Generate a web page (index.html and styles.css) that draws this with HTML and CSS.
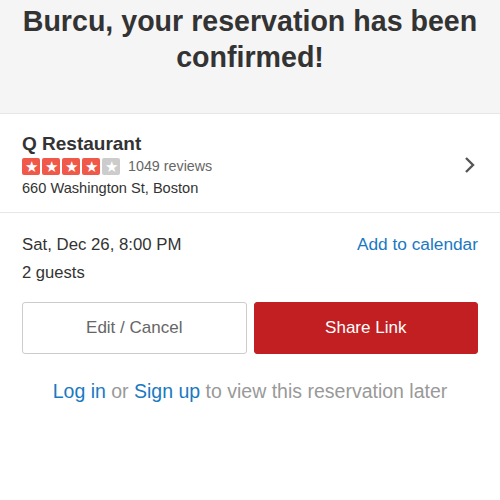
FILE: index.html
```html
<!DOCTYPE html>
<html>
<head>
    <title>Reservation confirmed</title>
    <link rel="stylesheet" href="styles.css">
</head>
<body>
    <div class="header">
        <h1>Burcu, your reservation has been confirmed!</h1>
    </div>

    <div class="biz">
        <div class="biz-info">
            <div class="biz-name">Q Restaurant</div>
            <div class="rating">
                <div class="stars">
                    <span class="star on">&#9733;</span>
                    <span class="star on">&#9733;</span>
                    <span class="star on">&#9733;</span>
                    <span class="star on">&#9733;</span>
                    <span class="star">&#9733;</span>
                </div>
                <span class="reviews">1049 reviews</span>
            </div>
            <div class="address">660 Washington St, Boston</div>
        </div>
        <svg class="chevron" width="12" height="18" viewBox="0 0 12 18">
            <path d="M2 2 L9 9 L2 16" fill="none" stroke="#555" stroke-width="2.4"/>
        </svg>
    </div>

    <div class="details">
        <div class="row">
            <span>Sat, Dec 26, 8:00 PM</span>
            <a class="link" href="#">Add to calendar</a>
        </div>
        <div class="guests">2 guests</div>

        <div class="buttons">
            <button class="btn btn-plain">Edit / Cancel</button>
            <button class="btn btn-red">Share Link</button>
        </div>

        <p class="login"><a class="link" href="#">Log in</a> or <a class="link" href="#">Sign up</a> to view this reservation later</p>
    </div>
</body>
</html>
```

FILE: styles.css
```css
body { margin: 0; font-family: "Liberation Sans", Arial, sans-serif; color: #333; background: #fff; }

.header { background: #f5f5f5; height: 114px; border-bottom: 1px solid #e6e6e6; padding-top: 3px; box-sizing: border-box; }
.header h1 { margin: 0; padding: 0 16px; font-size: 28.6px; line-height: 36px; text-align: center; color: #333; }

.biz { display: flex; align-items: center; justify-content: space-between; padding: 18px 24px 14px 22px; border-bottom: 1px solid #e6e6e6; height: 99px; box-sizing: border-box; }
.biz-name { font-size: 19px; font-weight: bold; line-height: 22px; }
.rating { display: flex; align-items: center; margin-top: 3px; }
.stars { display: flex; gap: 2px; }
.star { width: 18px; height: 17px; border-radius: 2px; background: #ccc; color: #fff; font-size: 15px; line-height: 17px; text-align: center; }
.star.on { background: #f0594a; }
.reviews { margin-left: 8px; font-size: 14.3px; color: #666; }
.address { font-size: 14.6px; line-height: 20px; margin-top: 3px; }

.details { padding: 20px 22px 0 22px; }
.row { display: flex; justify-content: space-between; align-items: baseline; font-size: 16.8px; line-height: 22px; }
.row .link { font-size: 17.3px; }
.guests { font-size: 16.6px; line-height: 22px; margin-top: 6px; }
.link { color: #1a79c2; text-decoration: none; }

.buttons { display: flex; gap: 7px; margin-top: 18px; }
.btn { flex: 1; height: 52px; border-radius: 3px; font-family: inherit; font-size: 17px; }
.btn-plain { background: #fff; border: 1px solid #ccc; color: #666; }
.btn-red { background: #c11f21; border: 1px solid #c11f21; color: #fff; }

.login { text-align: center; font-size: 19.5px; color: #999; margin: 26px 0 0 0; }
```
